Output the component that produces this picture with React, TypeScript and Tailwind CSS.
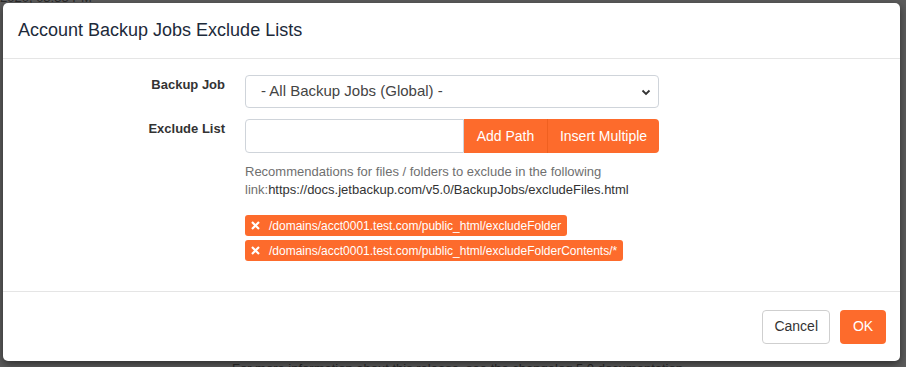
import { useState } from "react";

const paths = [
  "/domains/acct0001.test.com/public_html/excludeFolder",
  "/domains/acct0001.test.com/public_html/excludeFolderContents/*",
];

const ExcludeListsModal = () => {
  const [items, setItems] = useState<string[]>(paths);

  return (
    <div className="absolute left-[3px] top-[3px] w-[897px] h-[358px] bg-white rounded-[5px] flex flex-col shadow-[0_3px_9px_rgba(0,0,0,0.5)]">
      <div className="h-[56px] flex items-center px-[15px] border-b border-[#e5e5e5]">
        <div className="text-[18px] text-[#1d2a3a]">Account Backup Jobs Exclude Lists</div>
      </div>
      <div className="flex-grow pt-[16px]">
        <div className="flex items-center">
          <div className="w-[222px] text-right text-[13px] font-bold text-[#333] self-start pt-[0px]">Backup Job</div>
          <div className="ml-[20px] w-[414px] h-[33px] border border-[#cfd4da] rounded-[4px] flex items-center justify-between pl-[15px] pr-[6px]">
            <span className="text-[15px] text-[#444]">- All Backup Jobs (Global) -</span>
            <svg width="12" height="12" viewBox="0 0 12 12">
              <path d="M2.5 4.5 L6 8 L9.5 4.5" fill="none" stroke="#333" strokeWidth="1.8" />
            </svg>
          </div>
        </div>
        <div className="flex items-start mt-[11px]">
          <div className="w-[222px] text-right text-[13px] font-bold text-[#333] pt-[0px]">Exclude List</div>
          <div className="ml-[20px] w-[414px]">
            <div className="flex h-[34px]">
              <div className="w-[219px] border border-[#cfd4da] rounded-l-[4px]"></div>
              <button className="w-[83px] bg-[#fd6b2c] text-white text-[14px]">Add Path</button>
              <button className="w-[112px] bg-[#fd6b2c] text-white text-[14px] border-l border-[#f06020] rounded-r-[4px]">Insert Multiple</button>
            </div>
            <div className="mt-[10px] text-[13px] leading-[18px] text-[#6f6f6f]">
              Recommendations for files / folders to exclude in the following
              <br />
              link:<span className="text-[#333]">https://docs.jetbackup.com/v5.0/BackupJobs/excludeFiles.html</span>
            </div>
            <div className="mt-[16px] flex flex-col items-start gap-[4px]">
              {items.map((p, idx) => (
                <div key={`path-${idx}`} className="h-[21px] bg-[#fd6b2c] rounded-[3px] flex items-center pl-[6px] pr-[6px] text-white text-[12px]">
                  <button onClick={() => setItems(items.filter((_, i) => i !== idx))} className="mr-[9px] flex items-center">
                    <svg width="9" height="9" viewBox="0 0 9 9">
                      <path d="M1 1 L8 8 M8 1 L1 8" stroke="white" strokeWidth="2.2" />
                    </svg>
                  </button>
                  {p}
                </div>
              ))}
            </div>
          </div>
        </div>
      </div>
      <div className="h-[70px] border-t border-[#e5e5e5] flex items-center justify-end gap-[10px] pr-[14px]">
        <button className="h-[34px] px-[11px] border border-[#cfcfcf] rounded-[4px] text-[14px] text-[#333] bg-white">Cancel</button>
        <button className="h-[34px] w-[46px] rounded-[4px] text-[14px] text-white bg-[#fd6b2c]">OK</button>
      </div>
    </div>
  );
};

const App = () => {
  return (
    <div className="relative w-[906px] h-[367px] overflow-hidden bg-[#5c5c5c] font-['Liberation_Sans',Arial,sans-serif]">
      <div className="text-[13px] text-[#2a2a2a] leading-[14px] mt-[-9px]">2020, 03:35 PM</div>
      <div className="absolute left-[232px] top-[359px] text-[13px] text-[#2a2a2a]">
        For more information about this release, see the changelog 5.0 documentation
      </div>
      <ExcludeListsModal />
    </div>
  );
};

export default App;
